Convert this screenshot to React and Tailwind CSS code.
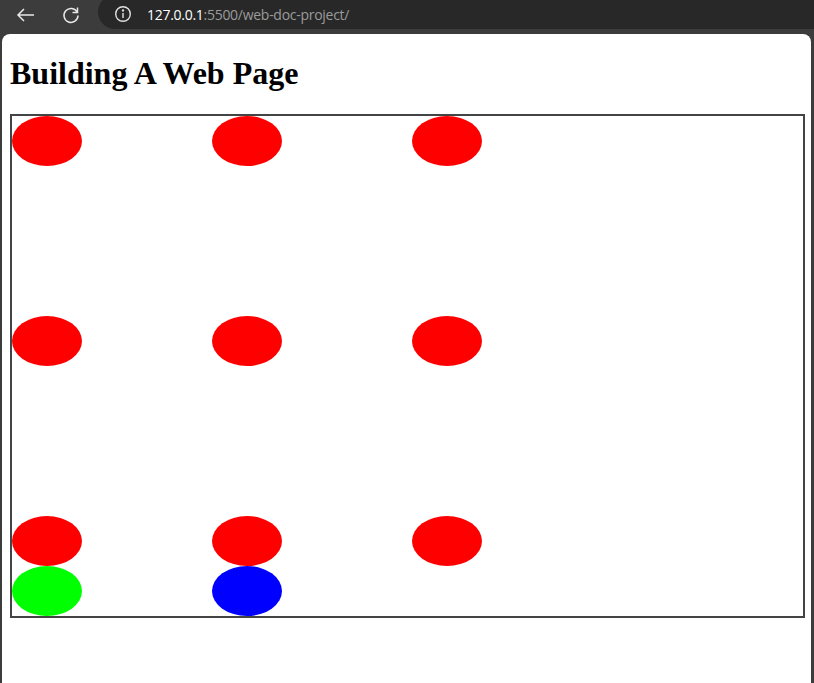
function Dot({ color = "bg-[#ff0000]" }) {
  return <div className={`w-[70px] h-[50px] rounded-[50%] ${color}`} />;
}

function Cell({ children }) {
  return <div className="w-[200px] flex flex-col">{children}</div>;
}

export default function App() {
  const red = "bg-[#ff0000]";
  return (
    <div className="w-[814px] h-[683px] bg-[#3c3c3c] flex flex-col overflow-hidden">
      <div className="h-[34px] flex items-start shrink-0">
        <div className="w-[98px] h-[29px] flex items-center">
          <svg className="ml-[16px]" width="20" height="20" viewBox="0 0 20 20" fill="none" stroke="#e8e8e8" strokeWidth="1.5">
            <path d="M18 10H2M8 4l-6 6 6 6" />
          </svg>
          <svg className="ml-[25px]" width="20" height="20" viewBox="0 0 20 20" fill="none" stroke="#e8e8e8" strokeWidth="1.5">
            <path d="M16.2 7.2A7 7 0 1 0 17 10.5" />
            <path d="M16.5 2.5v5h-5" />
          </svg>
        </div>
        <div className="flex-1 -mr-[40px] -mt-[5px] h-[34px] rounded-full bg-[#282828] flex items-center pt-[4px]">
          <svg className="ml-[16px]" width="18" height="18" viewBox="0 0 18 18" fill="none" stroke="#e3e3e3" strokeWidth="1.4">
            <circle cx="9" cy="9" r="7.3" />
            <path d="M9 8v5" />
            <circle cx="9" cy="5.4" r="0.5" fill="#e3e3e3" />
          </svg>
          <span className="ml-[15px] text-[14px] font-['Open_Sans',sans-serif] tracking-[-0.28px]">
            <span className="text-[#ffffff]">127.0.0.1</span>
            <span className="text-[#9b9b9b]">:5500/web-doc-project/</span>
          </span>
        </div>
      </div>
      <div className="flex-1 ml-[2px] mr-[3px] bg-white rounded-t-[8px] px-[8px] font-['Liberation_Serif',serif] text-black">
        <h1 className="mt-[21px] mb-[22px] text-[32px] leading-[37px] font-bold">Building A Web Page</h1>
        <div className="w-[795px] h-[504px] border-2 border-[#444444] flex flex-col">
          <div className="h-[200px] flex">
            <Cell><Dot color={red} /></Cell>
            <Cell><Dot color={red} /></Cell>
            <Cell><Dot color={red} /></Cell>
          </div>
          <div className="h-[200px] flex">
            <Cell><Dot color={red} /></Cell>
            <Cell><Dot color={red} /></Cell>
            <Cell><Dot color={red} /></Cell>
          </div>
          <div className="flex">
            <Cell>
              <Dot color={red} />
              <Dot color="bg-[#00ff00]" />
            </Cell>
            <Cell>
              <Dot color={red} />
              <Dot color="bg-[#0000ff]" />
            </Cell>
            <Cell><Dot color={red} /></Cell>
          </div>
        </div>
      </div>
    </div>
  );
}
